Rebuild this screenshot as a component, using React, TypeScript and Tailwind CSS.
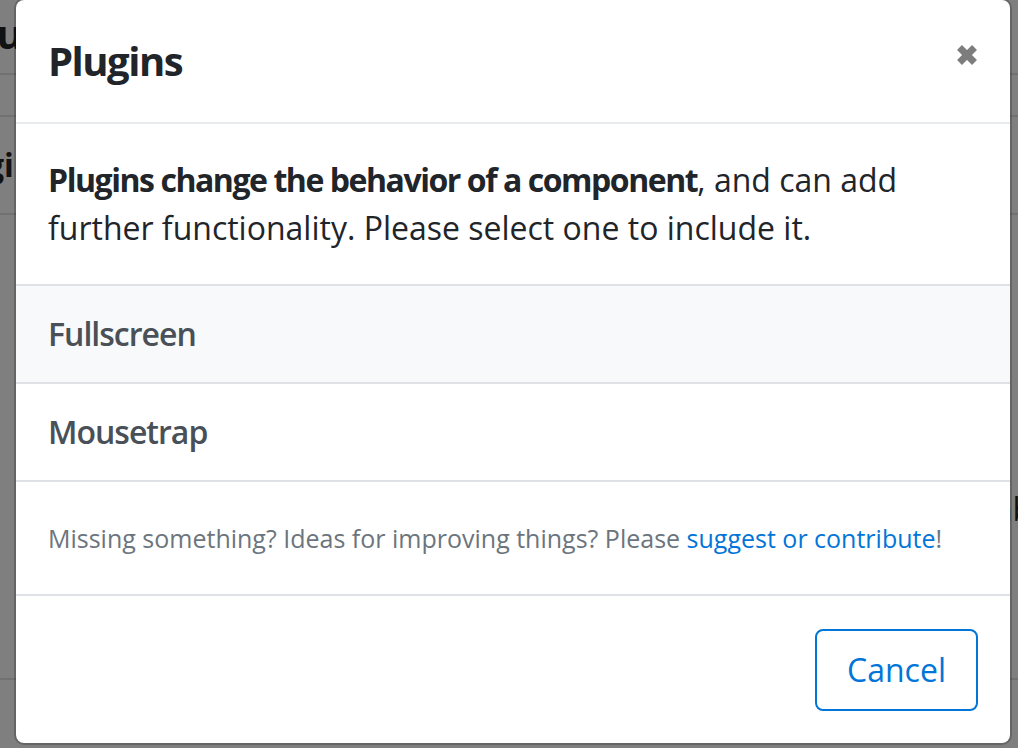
import { X } from 'lucide-react'

const plugins = ['Fullscreen', 'Mousetrap']

function Backdrop() {
  // page behind the dialog, only its edges show through
  return (
    <div className="h-[748px] w-[1018px] overflow-hidden bg-white text-[#212529]">
      <div className="h-[75px] border-b-2 border-[#dee2e6] pt-[10px] text-[40px] font-bold leading-[48px]">
        <span className="-ml-[31px]">Audit</span>
      </div>
      <div className="h-[42px] border-b-2 border-[#dee2e6]" />
      <div className="h-[98px] border-b-2 border-[#dee2e6] pt-[24px] text-[32px] font-bold leading-[48px]">
        <span className="-ml-[14px]">gins</span>
      </div>
      <div className="flex h-[465px] items-start justify-end border-b-2 border-[#dee2e6] pt-[270px] text-[32px] leading-[48px]">
        <span className="-mr-[14px]">tab</span>
      </div>
    </div>
  )
}

export default function App() {
  return (
    <div className="relative h-[748px] w-[1018px] overflow-hidden" style={{ fontFamily: '"Open Sans", "Noto Sans", sans-serif' }}>
      <Backdrop />
      <div className="absolute inset-0 bg-black/50">
        <div className="ml-[14px] -mt-[2px] w-[998px] overflow-hidden rounded-[10px] border-2 border-black/20 bg-white bg-clip-padding">
          <div className="flex h-[124px] items-center justify-between border-b-2 border-[#e9ecef] px-[32px]">
            <h5 className="text-[40px] font-bold leading-[60px] tracking-[-1.5px] text-[#212529]">Plugins</h5>
            <button className="-mr-[9px] -mt-[12px] flex h-[40px] w-[40px] items-center justify-center text-[#7d7d7d]">
              <X size={30} strokeWidth={5.5} strokeLinecap="butt" />
            </button>
          </div>
          <div className="px-[32px] py-[32px] text-[32px] leading-[48px] text-[#212529]">
            <p>
              <strong className="font-bold tracking-[-1.45px]">Plugins change the behavior of a component</strong>, and
              can add further functionality. Please select one to include it.
            </p>
          </div>
          <ul>
            {plugins.map((p, i) => (
              <li
                key={p}
                className={`border-t-2 border-[#dee2e6] px-[32px] py-[24px] text-[32px] font-semibold leading-[48px] tracking-[-1px] text-[#495057] ${i === 0 ? 'bg-[#f8f9fa]' : 'bg-white'}`}
              >
                {p}
              </li>
            ))}
          </ul>
          <div className="flex h-[116px] items-center border-y-2 border-[#dee2e6] px-[32px] text-[25px] leading-[38px] text-[#6c757d]">
            <p>
              Missing something? Ideas for improving things? Please{' '}
              <a className="text-[#0275d8]">suggest or contribute</a>!
            </p>
          </div>
          <div className="flex justify-end px-[32px] pt-[33px] pb-[32px]">
            <button className="h-[82px] w-[163px] rounded-[8px] border-2 border-[#0275d8] text-[32px] leading-[48px] text-[#0275d8]">
              Cancel
            </button>
          </div>
        </div>
      </div>
    </div>
  )
}
